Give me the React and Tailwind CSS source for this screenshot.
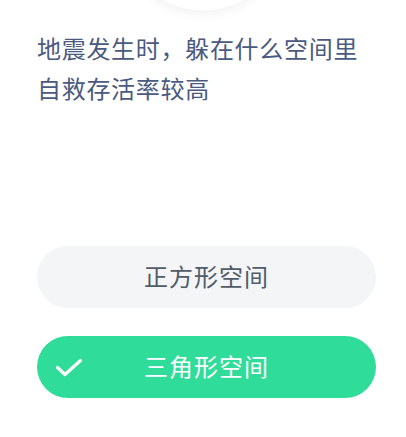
export default function App() {
  const font = { fontFamily: '"Noto Sans CJK SC", "Noto Sans", sans-serif' };
  return (
    <div className="w-[406px] h-[437px] bg-white overflow-hidden" style={font}>
      <div className="mx-auto -mt-[132px] w-[150px] h-[142px] rounded-full bg-white shadow-[0_3px_12px_rgba(0,0,0,0.06)]" />
      <div className="mt-[18px] pl-[37px] pr-[30px] text-[24px] leading-[40px] tracking-[0.7px] text-[#4b5a80]">
        <p>地震发生时，躲在什么空间里</p>
        <p>自救存活率较高</p>
      </div>
      <div className="mt-[138px] pl-[37px] pr-[30px] flex flex-col gap-[28px]">
        <div className="h-[62px] pb-[2px] rounded-full bg-[#f3f5f7] flex items-center justify-center text-[24px] tracking-[1px] text-[#525c68]">
          正方形空间
        </div>
        <div className="relative h-[62px] pb-[2px] rounded-full bg-[#2fdc99] flex items-center justify-center text-[24px] tracking-[1px] text-white">
          <svg className="absolute left-[18px] top-[22px]" width="28" height="20" viewBox="0 0 28 20" fill="none">
            <path d="M2.5 9.5 L10 16.5 L25.5 2.5" stroke="white" strokeWidth="3.2" strokeLinecap="round" strokeLinejoin="round" />
          </svg>
          三角形空间
        </div>
      </div>
    </div>
  );
}
